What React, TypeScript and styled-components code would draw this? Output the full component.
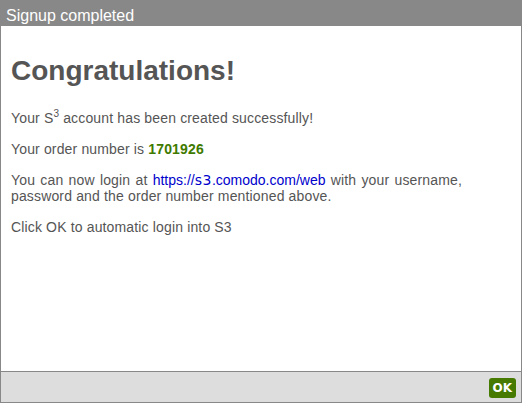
import styled, { createGlobalStyle } from 'styled-components'

const GlobalStyle = createGlobalStyle`
  html, body {
    margin: 0;
    padding: 0;
    background: #ffffff;
  }
`

const Dialog = styled.div`
  width: 522px;
  height: 403px;
  box-sizing: border-box;
  display: flex;
  flex-direction: column;
  font-family: 'Liberation Sans', Arial, sans-serif;
  border: 1px solid #888888;
  border-top: none;
  background: #ffffff;
`

const TitleBar = styled.div`
  height: 26px;
  margin: 0 -1px;
  background: #888888;
  color: #ffffff;
  font-size: 16px;
  line-height: 16px;
  padding: 8px 0 0 6px;
  box-sizing: border-box;
  overflow: hidden;
  white-space: nowrap;
`

const Body = styled.div`
  flex: 1;
  padding: 29px 10px 0 10px;
  color: #555555;
`

const Heading = styled.h1`
  margin: 0 0 23px;
  font-size: 28px;
  line-height: 32px;
  font-weight: bold;
  color: #555555;
`

const Para = styled.p<{ $gap?: number }>`
  width: 451px;
  margin: ${(p) => p.$gap ?? 0}px 0 15px;
  font-size: 14px;
  line-height: 16px;
  letter-spacing: 0.15px;
  text-align: justify;
`

const Sup = styled.sup`
  font-size: 10px;
  line-height: 0;
`

const OrderNumber = styled.strong`
  color: #3f7a00;
`

const Link = styled.a`
  color: #0000cc;
  text-decoration: none;
  letter-spacing: 0;
`

const Odd = styled.span`
  font-family: 'DejaVu Sans', Verdana, sans-serif;
  font-size: 14px;
  letter-spacing: 0.5px;
`

const Footer = styled.div`
  height: 30px;
  border-top: 1px solid #888888;
  background: #dddddd;
  display: flex;
  justify-content: flex-end;
  align-items: center;
  padding-right: 5px;
`

const OkButton = styled.button`
  height: 20px;
  padding: 0 4px;
  margin-top: 1px;
  border: none;
  border-radius: 3px;
  background: #467a00;
  color: #ffffff;
  font-family: 'DejaVu Sans', Verdana, sans-serif;
  font-weight: bold;
  font-size: 12px;
  cursor: pointer;
`

const App = () => {
  return (
    <>
      <GlobalStyle />
      <Dialog>
        <TitleBar>Signup completed</TitleBar>
        <Body>
          <Heading>Congratulations!</Heading>
          <Para>
            Your S<Sup>3</Sup> account has been created successfully!
          </Para>
          <Para>
            Your order number is <OrderNumber>1701926</OrderNumber>
          </Para>
          <Para>
            You can now login at{' '}
            <Link href="#">
              https://<Odd>s3</Odd>.comodo.com/web
            </Link>{' '}
            with your username, password and the order number mentioned above.
          </Para>
          <Para $gap={2}>Click OK to automatic login into S3</Para>
        </Body>
        <Footer>
          <OkButton>OK</OkButton>
        </Footer>
      </Dialog>
    </>
  )
}

export default App
